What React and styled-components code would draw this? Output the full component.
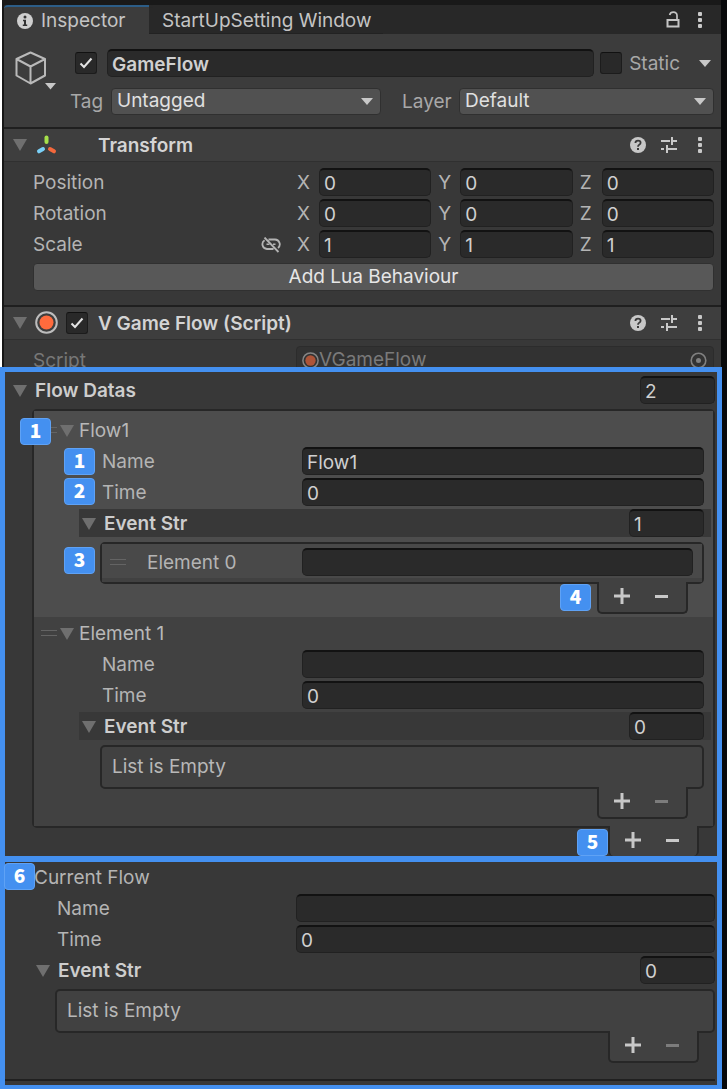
import React, { useId } from "react";
import styled, { createGlobalStyle, css } from "styled-components";

const GlobalStyle = createGlobalStyle`
  *, *::before, *::after { box-sizing: border-box; }
  body {
    margin: 0;
    background: #08090b;
    color: #c4c4c4;
    font: 400 19px/28px Inter, "Liberation Sans", sans-serif;
  }
  button, input, select { font: inherit; color: inherit; margin: 0; }
  h2 { margin: 0; font-size: inherit; font-weight: inherit; }
`;

const BLUE = "#4490f0";

/* ---------- window frame ---------- */

const Inspector = styled.main`
  display: flex;
  flex-direction: column;
  min-height: 100vh;
  padding-right: 5px;
`;

const Window = styled.div`
  margin-right: 1px;
  border-left: 2px solid #fff;
  background: #383838;
`;

const WindowInner = styled.div`
  border-left: 2px solid #161616;
  border-top: 5px solid #191919;
`;

const TabBar = styled.nav`
  display: flex;
  height: 29px;
  background: #282828;
`;

const Tab = styled.button`
  display: flex;
  align-items: center;
  gap: 8px;
  height: 29px;
  padding: 2px 12px 0 13px;
  border: 0;
  border-top: 2px solid ${(p) => (p.$active ? "#2c5d87" : "#282828")};
  border-bottom: 1px solid ${(p) => (p.$active ? "#3c3c3c" : "#222")};
  border-radius: 4px 0 0 0;
  background: ${(p) => (p.$active ? "#3c3c3c" : "#282828")};
  white-space: nowrap;
  ${(p) => p.$active && css`width: 145px;`}
`;

const Tools = styled.div`
  display: flex;
  align-items: center;
  gap: ${(p) => p.$gap || 9}px;
  margin-left: auto;
  padding-right: 12px;
`;

const IconButton = styled.button`
  display: grid;
  place-items: center;
  min-width: ${(p) => p.$w || 18}px;
  height: 20px;
  padding: 0;
  border: 0;
  background: none;
`;

/* ---------- fields ---------- */

const Field = styled.input`
  flex: ${(p) => (p.$w ? "none" : "1 1 0")};
  width: ${(p) => (p.$w ? p.$w + "px" : "0")};
  min-width: 0;
  height: 28px;
  padding: 2px 4px 0;
  border: 1px solid #212121;
  border-top: 2px solid #121212;
  border-radius: 5px;
  background: #2a2a2a;
  color: #d0d0d0;
  outline: 0;
  font-weight: ${(p) => (p.$bold ? 600 : 400)};
`;

const CheckLabel = styled.label`
  display: flex;
  align-items: center;
  gap: 7px;
  color: #a8a8a8;
`;

const CheckText = styled.span`
  padding-top: 2px;
  line-height: 26px;
`;

const CheckBox = styled.span`
  display: grid;
  width: 22px;
  height: 22px;
  > * { grid-area: 1 / 1; place-self: center; }
  svg { pointer-events: none; }
`;

const CheckInput = styled.input`
  appearance: none;
  width: 22px;
  height: 22px;
  border: 1px solid #1c1c1c;
  border-top-color: #111;
  border-radius: 3px;
  background: #292929;
`;

const SelectBox = styled.span`
  display: grid;
  flex: ${(p) => p.$grow} 1 0;
  min-width: 0;
  align-items: center;
  > * { grid-area: 1 / 1; }
  svg { justify-self: end; margin-right: 8px; pointer-events: none; }
`;

const Select = styled.select`
  appearance: none;
  width: 100%;
  height: 27px;
  padding: 0 24px 0 5px;
  border: 1px solid #303030;
  border-radius: 4px;
  background: #515151;
  color: #e0e0e0;
  line-height: 22px;
`;

/* ---------- object header ---------- */

const ObjectHeader = styled.header`
  display: flex;
  padding: 15px 7px 12px 11px;
  background: #3c3c3c;
`;

const ObjectIcon = styled.div`
  flex: none;
  width: 55px;
  padding-top: 2px;
`;

const HeaderRows = styled.div`
  display: flex;
  flex: 1;
  flex-direction: column;
  gap: 10px;
`;

const NameRow = styled.div`
  display: flex;
  align-items: center;
  gap: 6px;
  padding-left: 5px;
  ${CheckLabel}:first-child { margin-right: 4px; }
`;

const StaticMenu = styled(IconButton)`
  margin-left: 10px;
`;

const TagRow = styled.div`
  display: flex;
  align-items: center;
`;

const TagLabel = styled.label`
  flex: none;
  width: ${(p) => p.$w}px;
  margin-left: ${(p) => p.$gap || 0}px;
  padding-top: 2px;
  line-height: 26px;
  color: #a8a8a8;
`;

/* ---------- components ---------- */

const ComponentBar = styled.div`
  display: flex;
  align-items: center;
  height: 35px;
  padding: 0 0 1px 9px;
  border-top: 2px solid #1f1f1f;
  border-bottom: 1px solid #303030;
  background: #3e3e3e;
`;

const ComponentMark = styled.span`
  display: flex;
  align-items: center;
  gap: 8px;
  width: 53px;
`;

const Title = styled.h2`
  padding: 2px 0 0 ${(p) => p.$inset}px;
  font-weight: 600;
  line-height: 26px;
  color: #d4d4d4;
`;

const Rows = styled.div`
  display: flex;
  flex-direction: column;
  gap: 3px;
  padding: ${(p) => p.$pad || "0"};
`;

const Row = styled.div`
  display: flex;
  align-items: center;
  height: 28px;
  padding: 0 ${(p) => p.$right || 0}px 0 ${(p) => p.$left || 0}px;
  position: relative;
`;

const RowLabel = styled.label`
  flex: none;
  display: flex;
  align-items: center;
  justify-content: space-between;
  width: ${(p) => (p.$w ? p.$w + "px" : "auto")};
  padding-top: 2px;
  line-height: 26px;
  color: ${(p) => (p.$dim ? "#777" : "#b4b4b4")};
`;

const Axes = styled.div`
  display: flex;
  flex: 1;
  gap: 7px;
`;

const Axis = styled.label`
  display: flex;
  flex: 1;
  min-width: 0;
  color: #b4b4b4;
`;

const AxisName = styled.span`
  width: 22px;
  padding-top: 2px;
  line-height: 26px;
`;

const WideButton = styled.button`
  height: 28px;
  margin-top: 2px;
  padding: 0;
  border: 1px solid #303030;
  border-radius: 4px;
  background: #585858;
  color: #e6e6e6;
  line-height: 24px;
`;

const ObjectField = styled.button`
  display: flex;
  flex: 1;
  align-items: center;
  height: 28px;
  padding: 0 6px 0 5px;
  border: 1px solid #2c2c2c;
  border-radius: 4px;
  background: #323232;
  color: #7a7a7a;
  svg:last-child { margin-left: auto; }
`;

/* ---------- lists ---------- */

const Region = styled.section`
  position: relative;
  margin-top: ${(p) => p.$overlap || 0}px;
  padding: ${(p) => p.$pad};
  border: solid ${BLUE};
  border-width: ${(p) => p.$border};
  background: #383838;
`;

const Foldout = styled.button`
  display: flex;
  align-items: center;
  gap: ${(p) => p.$gap || 8}px;
  padding: 2px 0 0;
  border: 0;
  background: none;
  color: ${(p) => (p.$bold ? "#cdcdcd" : "#b8b8b8")};
  font-weight: ${(p) => (p.$bold ? 600 : 400)};
  line-height: 26px;
`;

const Bar = styled.div`
  display: flex;
  align-items: center;
  justify-content: space-between;
  position: relative;
  min-height: 28px;
  margin: 0 0 0 ${(p) => p.$left || 0}px;
  padding: 0 ${(p) => p.$right || 0}px 0 3px;
  background: #383838;
`;

const List = styled.div`
  position: relative;
  margin: ${(p) => p.$margin};
  border: 2px solid #272727;
  border-radius: 5px;
  background: #414141;
`;

const Item = styled.div`
  padding: ${(p) => p.$pad};
  background: ${(p) => (p.$selected ? "#4d4d4d" : "#414141")};
`;

const Handle = styled.span`
  flex: none;
  width: 16px;
  height: 6px;
  margin-right: ${(p) => p.$gap || 3}px;
  border: solid #646464;
  border-width: 1px 0;
`;

const Empty = styled.p`
  margin: 0;
  padding: 6px 10px;
  color: #b8b8b8;
`;

const ElementRow = styled.div`
  display: flex;
  align-items: center;
  height: 38px;
  padding: 2px 9px 0 8px;
  border-bottom: 4px solid #414141;
  background: #494949;
`;

const Footer = styled.div`
  display: flex;
  align-items: center;
  justify-content: space-between;
  position: relative;
  width: 91px;
  height: ${(p) => (p.$cut ? 30 : 32)}px;
  margin: -2px ${(p) => p.$right}px 0 auto;
  padding: 0 15px 2px 13px;
  border: 2px solid #272727;
  border-top: 0;
  ${(p) => p.$cut && "border-bottom-width: 0;"}
  border-radius: 0 0 5px 5px;
  background: #414141;
`;

/* Numbered call-out laid over the panel */
const Badge = styled.span`
  position: absolute;
  z-index: 2;
  left: ${(p) => p.$x};
  top: ${(p) => p.$y || 0}px;
  width: 31px;
  height: 27px;
  border: 1px solid #5fa2f5;
  border-radius: 4px;
  background: ${BLUE};
  color: #fff;
  font: 900 19px/22px "Noto Sans CJK SC", sans-serif;
  text-align: center;
`;

const EndLine = styled.div`
  height: 2px;
  margin-top: 16px;
  background: #202020;
`;

/* ---------- icons ---------- */

const FoldIcon = () => (
  <svg width="14" height="12" viewBox="0 0 14 12"><path d="M0 0H14L7 12Z" fill="#6f6f6f" /></svg>
);
const DropIcon = () => (
  <svg width="12" height="7" viewBox="0 0 12 7"><path d="M0 0H12L6 7Z" fill="#c8c8c8" /></svg>
);
const KebabIcon = () => (
  <svg width="4" height="16" viewBox="0 0 4 16" fill="#c8c8c8">
    <rect width="4" height="4" y="0" rx="1" /><rect width="4" height="4" y="6" rx="1" /><rect width="4" height="4" y="12" rx="1" />
  </svg>
);
const InfoIcon = () => (
  <svg width="16" height="16" viewBox="0 0 16 16">
    <circle cx="8" cy="8" r="8" fill="#cfcfcf" />
    <circle cx="8" cy="4" r="1.5" fill="#333" />
    <path d="M6 6.8H9V11.5H10.2V13H5.8V11.5H7V8.2H6Z" fill="#333" />
  </svg>
);
const LockIcon = () => (
  <svg width="14" height="17" viewBox="0 0 14 17" fill="none" stroke="#c4c4c4" strokeWidth="2">
    <path d="M1.5 9H12.5V15.5H1.5Z" /><path d="M11 9V4.5Q11 1.2 7.3 1.2Q4.4 1.2 3.6 4" strokeWidth="1.7" />
  </svg>
);
const CubeIcon = () => (
  <svg width="43" height="40" viewBox="0 0 43 40">
    <path d="M15.5 1.5L30 8V24.5L15.5 32.5L1.5 24.5V8ZM1.5 8L15.5 15.5L30 8M15.5 15.5V32.5" fill="none" stroke="#b9b9b9" strokeWidth="2" strokeLinejoin="round" />
    <path d="M30 32H41L35.5 38.5Z" fill="#c8c8c8" />
  </svg>
);
const CheckIcon = () => (
  <svg width="14" height="12" viewBox="0 0 14 12"><path d="M1.5 6.5L5 10L12.5 1.5" fill="none" stroke="#e4e4e4" strokeWidth="2" /></svg>
);
const TransformIcon = () => (
  <svg width="23" height="20" viewBox="-1 0 23 20" strokeWidth="4" strokeLinecap="round" fill="none">
    <path d="M10.5 2.5V7" stroke="#a6e04a" /><path d="M7 14L3 16.3" stroke="#7ad0f7" /><path d="M14 14L18 16.3" stroke="#f4683c" />
  </svg>
);
const ScriptIcon = ({ size = 23, dim }) => (
  <svg width={size} height={size} viewBox="0 0 23 23" opacity={dim ? 0.6 : 1}>
    <circle cx="11.5" cy="11.5" r="10.3" fill="none" stroke="#bdbdbd" strokeWidth="2" />
    <circle cx="11.5" cy="11.5" r="7" fill="#ff6b3d" />
  </svg>
);
const HelpIcon = () => (
  <svg width="16" height="16" viewBox="0 0 16 16">
    <circle cx="8" cy="8" r="8" fill="#c8c8c8" />
    <path d="M5.4 6Q5.5 3.6 8 3.6Q10.6 3.6 10.6 5.8Q10.6 7 9.2 7.8Q8 8.5 8 9.8" fill="none" stroke="#3a3a3a" strokeWidth="1.8" />
    <rect x="7" y="11" width="2" height="2" fill="#3a3a3a" />
  </svg>
);
const PresetIcon = () => (
  <svg width="16" height="16" viewBox="0 0 16 16" fill="none" stroke="#c8c8c8" strokeWidth="2">
    <path d="M0 4H9M11 0V8M11 4H16M0 12H3M6 8V16M6 12H16" />
  </svg>
);
const UnlinkIcon = () => (
  <svg width="20" height="16" viewBox="0 0 20 16" fill="none" stroke="#b4b4b4" strokeWidth="1.8">
    <path d="M3.5 .5L17.5 15M7.5 2.5H14A4.8 4.8 0 0 1 17 11M12.5 12H6A4.8 4.8 0 0 1 3.6 3.2" />
    <path d="M5.5 7.2H8.5M12 7.2H14.5" strokeWidth="1.5" />
  </svg>
);
const TargetIcon = () => (
  <svg width="17" height="17" viewBox="0 0 17 17"><circle cx="8.5" cy="8.5" r="7.3" fill="none" stroke="#808080" strokeWidth="1.6" /><circle cx="8.5" cy="8.5" r="2.5" fill="#808080" /></svg>
);
const PlusIcon = () => (
  <svg width="16" height="16" viewBox="0 0 16 16"><path d="M0 8H16M8 0V16" stroke="#c8c8c8" strokeWidth="3" /></svg>
);
const MinusIcon = ({ off }) => (
  <svg width="13" height="3" viewBox="0 0 13 3"><path d="M0 1.5H13" stroke={off ? "#7c7c7c" : "#c8c8c8"} strokeWidth="3" /></svg>
);

const LinkSlot = styled(IconButton)`
  margin-right: 16px;
`;

/* ---------- pieces ---------- */

const Check = ({ label, text, checked }) => (
  <CheckLabel>
    <CheckBox>
      <CheckInput type="checkbox" defaultChecked={checked} aria-label={label} />
      {checked && <CheckIcon />}
    </CheckBox>
    {text && <CheckText>{text}</CheckText>}
  </CheckLabel>
);

const Dropdown = ({ id, value, grow }) => (
  <SelectBox $grow={grow}>
    <Select id={id} defaultValue={value}><option>{value}</option></Select>
    <DropIcon />
  </SelectBox>
);

const HeaderTools = () => (
  <Tools $gap={13}>
    <IconButton aria-label="Help"><HelpIcon /></IconButton>
    <IconButton aria-label="Presets"><PresetIcon /></IconButton>
    <IconButton aria-label="More"><KebabIcon /></IconButton>
  </Tools>
);

const VectorRow = ({ label, value, icon }) => (
  <Row>
    <RowLabel as="span" $w={264}>{label}{icon}</RowLabel>
    <Axes>
      {["X", "Y", "Z"].map((a) => (
        <Axis key={a}><AxisName>{a}</AxisName><Field aria-label={`${label} ${a}`} defaultValue={value} /></Axis>
      ))}
    </Axes>
  </Row>
);

const TextRow = ({ label, value, left, right, labelWidth, badge }) => {
  const id = useId();
  return (
    <Row $left={left} $right={right}>
      {badge}
      <RowLabel htmlFor={id} $w={labelWidth}>{label}</RowLabel>
      <Field id={id} defaultValue={value} />
    </Row>
  );
};

const ListBar = ({ title, count, left, right, gap }) => (
  <Bar $left={left} $right={right}>
    <Foldout $bold $gap={gap} aria-expanded="true"><FoldIcon />{title}</Foldout>
    <Field $w={75} aria-label={`${title} size`} defaultValue={count} />
  </Bar>
);

const ListFooter = ({ right, off, cut, badge }) => (
  <Footer $right={right} $cut={cut}>
    {badge}
    <IconButton $w={20} aria-label="Add"><PlusIcon /></IconButton>
    <IconButton $w={20} aria-label="Remove" disabled={off}><MinusIcon off={off} /></IconButton>
  </Footer>
);

const FlowItem = ({ title, name, events, selected, pad, badges = [] }) => (
  <Item $selected={selected} $pad={pad}>
    <Rows>
      <Row $left={7}>
        {badges[0]}
        <Handle />
        <Foldout $gap={5} aria-expanded="true"><FoldIcon />{title}</Foldout>
      </Row>
      <TextRow label="Name" value={name} left={68} right={7} labelWidth={200} badge={badges[1]} />
      <TextRow label="Time" value="0" left={68} right={7} labelWidth={200} badge={badges[2]} />
      <ListBar title="Event Str" count={events} left={45} right={7} />
    </Rows>
    <List $margin="5px 7px 0 66px">
      {badges[3]}
      {events ? (
        <ElementRow>
          <Handle $gap={21} />
          <RowLabel htmlFor="element-0" $w={155}>Element 0</RowLabel>
          <Field id="element-0" />
        </ElementRow>
      ) : (
        <Empty>List is Empty</Empty>
      )}
    </List>
    <ListFooter right={23} off={!events} badge={badges[4]} />
  </Item>
);

export default function App() {
  return (
    <>
      <GlobalStyle />
      <Inspector>
        <Window>
          <WindowInner>
            <TabBar>
              <Tab $active><InfoIcon />Inspector</Tab>
              <Tab>StartUpSetting Window</Tab>
              <Tools>
                <IconButton aria-label="Lock"><LockIcon /></IconButton>
                <IconButton aria-label="More"><KebabIcon /></IconButton>
              </Tools>
            </TabBar>

            <ObjectHeader>
              <ObjectIcon><CubeIcon /></ObjectIcon>
              <HeaderRows>
                <NameRow>
                  <Check label="Active" checked />
                  <Field $bold aria-label="Object name" defaultValue="GameFlow" />
                  <Check text="Static" />
                  <StaticMenu aria-label="Static options"><DropIcon /></StaticMenu>
                </NameRow>
                <TagRow>
                  <TagLabel htmlFor="tag" $w={41}>Tag</TagLabel>
                  <Dropdown id="tag" value="Untagged" grow={270} />
                  <TagLabel htmlFor="layer" $w={57} $gap={21}>Layer</TagLabel>
                  <Dropdown id="layer" value="Default" grow={255} />
                </TagRow>
              </HeaderRows>
            </ObjectHeader>

            <ComponentBar>
              <ComponentMark><FoldIcon /><TransformIcon /></ComponentMark>
              <Title $inset={32}>Transform</Title>
              <HeaderTools />
            </ComponentBar>
            <Rows $pad="6px 7px 14px 29px">
              <VectorRow label="Position" value="0" />
              <VectorRow label="Rotation" value="0" />
              <VectorRow
                label="Scale"
                value="1"
                icon={<LinkSlot aria-label="Constrain proportions"><UnlinkIcon /></LinkSlot>}
              />
              <WideButton>Add Lua Behaviour</WideButton>
            </Rows>

            <ComponentBar>
              <ComponentMark><FoldIcon /><ScriptIcon /></ComponentMark>
              <Check label="Enabled" checked />
              <Title $inset={10}>V Game Flow (Script)</Title>
              <HeaderTools />
            </ComponentBar>
            <Rows $pad="6px 7px 0 29px">
              <Row>
                <RowLabel as="span" $w={263} $dim>Script</RowLabel>
                <ObjectField disabled><ScriptIcon size={17} dim />VGameFlow<TargetIcon /></ObjectField>
              </Row>
            </Rows>
          </WindowInner>
        </Window>

        <Region $overlap={-7} $border="5px 5px 0" $pad="4px 2px 0 5px">
          <ListBar title="Flow Datas" count="2" />
          <List $margin="5px 0 0 22px">
            <FlowItem
              title="Flow1" name="Flow1" events={1} selected pad="5px 2px 3px 0"
              badges={[
                <Badge key="a" $x="-14px" $y={2}>1</Badge>,
                <Badge key="b" $x="30px" $y={1}>1</Badge>,
                <Badge key="c" $x="30px">2</Badge>,
                <Badge key="d" $x="-38px" $y={3}>3</Badge>,
                <Badge key="e" $x="-39px" $y={2}>4</Badge>,
              ]}
            />
            <FlowItem title="Element 1" events={0} pad="2px 2px 7px 0" />
          </List>
          <ListFooter right={16} cut badge={<Badge $x="-33px" $y={3}>5</Badge>} />
        </Region>

        <Region $border="6px 5px 5px" $pad="1px 2px 4px 0">
          <Rows>
            <Row $left={29}>
              <Badge $x="-1px">6</Badge>
              <RowLabel as="h2">Current Flow</RowLabel>
            </Row>
            <TextRow label="Name" left={52} labelWidth={239} />
            <TextRow label="Time" value="0" left={52} labelWidth={239} />
            <ListBar title="Event Str" count="0" left={28} />
          </Rows>
          <List $margin="5px 0 0 50px"><Empty>List is Empty</Empty></List>
          <ListFooter right={16} off />
          <EndLine />
        </Region>
      </Inspector>
    </>
  );
}
